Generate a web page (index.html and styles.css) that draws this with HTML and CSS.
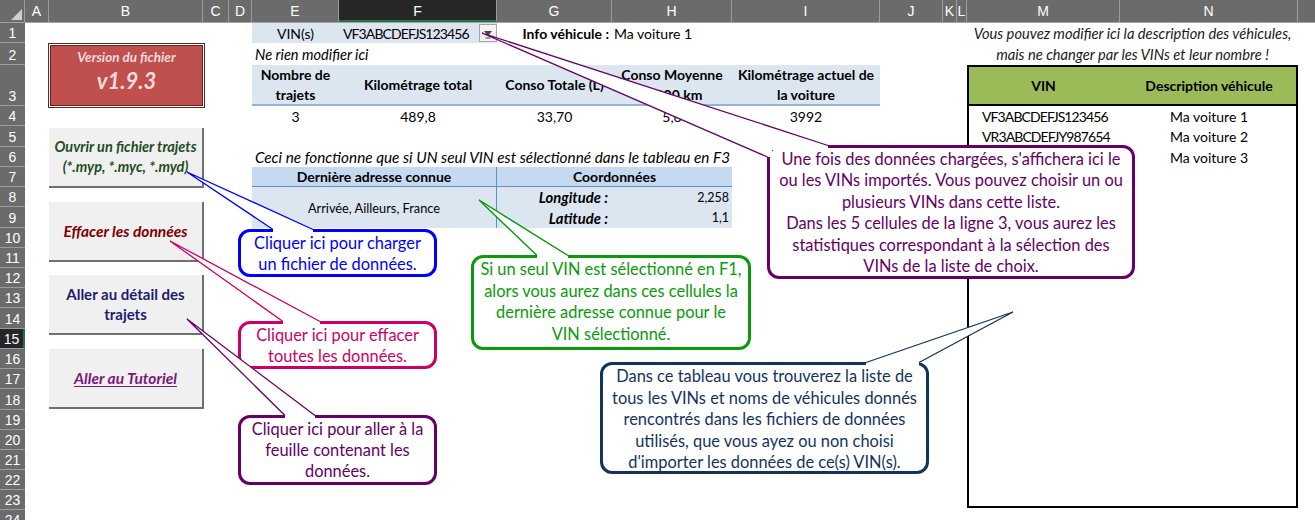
FILE: index.html
```html
<!DOCTYPE html>
<html lang="fr">
<head>
<meta charset="utf-8">
<title>Tableau de bord véhicules</title>
<link rel="stylesheet" href="styles.css">
</head>
<body>
<div class="page">
  <div class="colheads">
    <div class="ch corner"><span class="tri"></span></div>
    <div class="ch">A</div>
    <div class="ch">B</div>
    <div class="ch">C</div>
    <div class="ch">D</div>
    <div class="ch">E</div>
    <div class="ch sel">F</div>
    <div class="ch">G</div>
    <div class="ch">H</div>
    <div class="ch">I</div>
    <div class="ch">J</div>
    <div class="ch">K</div>
    <div class="ch">L</div>
    <div class="ch">M</div>
    <div class="ch">N</div>
    <div class="ch last"></div>
  </div>

  <div class="sheet">
    <div class="rh">1</div>
    <div class="rh">2</div>
    <div class="rh">3</div>
    <div class="rh">4</div>
    <div class="rh">5</div>
    <div class="rh">6</div>
    <div class="rh">7</div>
    <div class="rh">8</div>
    <div class="rh">9</div>
    <div class="rh">10</div>
    <div class="rh">11</div>
    <div class="rh">12</div>
    <div class="rh">13</div>
    <div class="rh">14</div>
    <div class="rh sel">15</div>
    <div class="rh">16</div>
    <div class="rh">17</div>
    <div class="rh">18</div>
    <div class="rh">19</div>
    <div class="rh">20</div>
    <div class="rh">21</div>
    <div class="rh">22</div>
    <div class="rh">23</div>
    <div class="rh">24</div>

    <!-- Version -->
    <div class="version">
      <div class="version-title">Version du fichier</div>
      <div class="version-num">v1.9.3</div>
    </div>

    <!-- Buttons -->
    <div class="buttons">
      <div class="btn btn-open">Ouvrir un fichier trajets<br>(*.myp, *.myc, *.myd)</div>
      <div class="btn btn-clear">Effacer les données</div>
      <div class="btn btn-detail">Aller au détail des<br>trajets</div>
      <div class="btn btn-tuto"><span>Aller au Tutoriel</span></div>
    </div>

    <!-- Row 1 -->
    <div class="cell c-e r-1 vin-label">VIN(s)</div>
    <div class="cell c-f r-1 vin-value">
      <span class="vin">VF3ABCDEFJS123456</span>
      <span class="dropdown">
        <svg width="16" height="15" viewBox="0 0 16 15"><path d="M4 5h8l-4 5z" fill="#444"/><path d="M5.5 12h5" stroke="#444" stroke-width="1"/></svg>
      </span>
    </div>
    <div class="cell c-g r-1 info-label">Info véhicule :</div>
    <div class="cell c-h r-1 info-value">Ma voiture 1</div>

    <!-- Row 2 -->
    <div class="cell c-e r-2 note">Ne rien modifier ici</div>

    <!-- Row 3 : headers -->
    <div class="sh c-e r-3">Nombre de<br>trajets</div>
    <div class="sh c-f r-3">Kilométrage total</div>
    <div class="sh c-g r-3">Conso Totale (L)</div>
    <div class="sh c-h r-3">Conso Moyenne<br>L/100 km</div>
    <div class="sh c-i r-3">Kilométrage actuel de<br>la voiture</div>

    <!-- Row 4 : values -->
    <div class="sv c-e r-4">3</div>
    <div class="sv c-f r-4">489,8</div>
    <div class="sv c-g r-4">33,70</div>
    <div class="sv c-h r-4">5,6</div>
    <div class="sv c-i r-4">3992</div>

    <!-- Row 6 -->
    <div class="cell c-e r-6 note note-wide">Ceci ne fonctionne que si UN seul VIN est sélectionné dans le tableau en F3</div>

    <!-- Address table -->
    <div class="ah ah-addr">Dernière adresse connue</div>
    <div class="ah ah-coord">Coordonnées</div>
    <div class="addr">Arrivée, Ailleurs, France</div>
    <div class="coord-label r-8">Longitude :</div>
    <div class="coord-val r-8">2,258</div>
    <div class="coord-label r-9">Latitude :</div>
    <div class="coord-val r-9">1,1</div>

    <!-- Right list -->
    <div class="list-note r-1">Vous pouvez modifier ici la description des véhicules,</div>
    <div class="list-note r-2">mais ne changer par les VINs et leur nombre !</div>
    <div class="lh c-m r-3">VIN</div>
    <div class="lh c-n r-3">Description véhicule</div>
    <div class="lv c-m r-4"><span class="vin">VF3ABCDEFJS123456</span></div>
    <div class="ld c-n r-4">Ma voiture 1</div>
    <div class="lv c-m r-5"><span class="vin">VR3ABCDEFJY987654</span></div>
    <div class="ld c-n r-5">Ma voiture 2</div>
    <div class="ld c-n r-6">Ma voiture 3</div>
    <div class="list-frame"></div>
  </div>

  <!-- Callouts -->
  <div class="callout co-blue">Cliquer ici pour charger<br>un fichier de données.</div>
  <div class="callout co-pink">Cliquer ici pour effacer<br>toutes les données.</div>
  <div class="callout co-plum">Cliquer ici pour aller à la<br>feuille contenant les<br>données.</div>
  <div class="callout co-green">Si un seul VIN est sélectionné en F1,<br>alors vous aurez dans ces cellules la<br>dernière adresse connue pour le<br>VIN sélectionné.</div>
  <div class="callout co-purple">Une fois des données chargées, s'affichera ici le<br>ou les VINs importés. Vous pouvez choisir un ou<br>plusieurs VINs dans cette liste.<br>Dans les 5 cellules de la ligne 3, vous aurez les<br>statistiques correspondant à la sélection des<br>VINs de la liste de choix.</div>
  <div class="callout co-navy">Dans ce tableau vous trouverez la liste de<br>tous les VINs et noms de véhicules donnés<br>rencontrés dans les fichiers de données<br>utilisés, que vous ayez ou non choisi<br>d'importer les données de ce(s) VIN(s).</div>

  <svg class="wedges" width="1315" height="520" viewBox="0 0 1315 520">
    <!-- blue -->
    <polygon points="187,172 273,229 273,234 313,234 313,229" fill="#fff"/>
    <polyline points="273,229.5 187,172 313,229.5" fill="none" stroke="#0000ff" stroke-width="1.3"/>
    <!-- pink -->
    <polygon points="170,241 283,321 283,326 320,326 320,321" fill="#fff"/>
    <polyline points="283,321.5 170,241 320,321.5" fill="none" stroke="#cc0066" stroke-width="1.3"/>
    <!-- plum -->
    <polygon points="187,319 285,415 285,420 315,420 315,415" fill="#fff"/>
    <polyline points="285,415.5 187,319 315,415.5" fill="none" stroke="#660066" stroke-width="1.3"/>
    <!-- green -->
    <polygon points="479,200 537,255 537,260 568,260 568,255" fill="#fff"/>
    <polyline points="537,255.5 479,200 568,255.5" fill="none" stroke="#0a9a0a" stroke-width="1.4"/>
    <!-- purple -->
    <polygon points="482,33 767.5,157 772,157 772,150 828,150 828,145" fill="#fff"/>
    <polyline points="767.5,157 482,33 828,145.5" fill="none" stroke="#660066" stroke-width="1.3"/>
    <!-- navy -->
    <polygon points="1013,312 866,362 866,367 919,367 919,362" fill="#fff"/>
    <polyline points="866,362.5 1013,312 919,362.5" fill="none" stroke="#13335e" stroke-width="1.3"/>
  </svg>
</div>
</body>
</html>
```

FILE: styles.css
```css
* { box-sizing: border-box; }

html, body {
  margin: 0;
  padding: 0;
  background: #fff;
}

body {
  font-family: "Lato", "Liberation Sans", sans-serif;
  font-size: 14px;
  color: #000;
}

.page {
  position: relative;
  width: 1315px;
  height: 520px;
  overflow: hidden;
}

/* ---------- column headers ---------- */
.colheads {
  display: grid;
  grid-template-columns: 25px 24px 154px 26px 23px 87px 158px 115px 120px 148px 63px 14px 10px 153px 178px 1fr;
  height: 23px;
  background: #6b6b6b;
  border-bottom: 1px solid #a3a3a3;
}

.ch {
  display: flex;
  align-items: center;
  justify-content: center;
  color: #fff;
  font-family: "Liberation Sans", sans-serif;
  font-size: 14px;
  border-right: 1px solid #9c9c9c;
  position: relative;
}

.ch.last { border-right: none; }

.ch.sel {
  background: #262626;
  border-bottom: 2px solid #217346;
  padding-top: 2px;
}

.corner .tri {
  position: absolute;
  right: 2px;
  bottom: 2px;
  width: 0;
  height: 0;
  border-left: 11px solid transparent;
  border-bottom: 11px solid #cfcfcf;
}

/* ---------- sheet grid ---------- */
.sheet {
  display: grid;
  grid-template-columns: 25px 24px 154px 26px 23px 87px 158px 115px 120px 148px 63px 14px 10px 153px 178px 1fr;
  grid-template-rows: 20px 22px 41px 20px 21px 20px 20px 20px 21px 20px 20px 20px 20px 21px 20px 20px 20px 21px 20px 20px 20px 20px 20px 20px;
}

.rh {
  grid-column: 1;
  display: flex;
  align-items: flex-end;
  justify-content: center;
  padding-bottom: 1px;
  background: #6b6b6b;
  color: #fff;
  font-family: "Liberation Sans", sans-serif;
  font-size: 14px;
  border-bottom: 1px solid #9c9c9c;
}

.rh.sel {
  background: #262626;
  border-right: 2px solid #217346;
}

.c-e { grid-column: 6; }
.c-f { grid-column: 7; }
.c-g { grid-column: 8; }
.c-h { grid-column: 9; }
.c-i { grid-column: 10; }
.c-m { grid-column: 14; }
.c-n { grid-column: 15; }
.r-1 { grid-row: 1; }
.r-2 { grid-row: 2; }
.r-3 { grid-row: 3; }
.r-4 { grid-row: 4; }
.r-5 { grid-row: 5; }
.r-6 { grid-row: 6; }
.r-8 { grid-row: 8; }
.r-9 { grid-row: 9; }

.cell {
  display: flex;
  align-items: center;
  white-space: nowrap;
  padding: 0 3px;
  font-size: 14px;
}

.vin { letter-spacing: -0.9px; }

/* ---------- version box ---------- */
.version {
  grid-column: 3;
  grid-row: 2 / 4;
  align-self: start;
  height: 65px;
  margin: 0 -2px 0 -1px;
  border: 3px double #632523;
  background: #c0504d;
  background-clip: padding-box;
  color: #f2dcdb;
  display: flex;
  flex-direction: column;
  align-items: center;
  font-style: italic;
  font-weight: bold;
}

.version-title {
  font-size: 13.5px;
  line-height: 18px;
  padding-top: 2px;
}

.version-num {
  font-size: 22px;
  line-height: 28px;
  margin-top: 1px;
}

/* ---------- buttons ---------- */
.buttons {
  grid-column: 3;
  grid-row: 5 / 22;
  display: flex;
  flex-direction: column;
  gap: 13.7px;
  padding-top: 2px;
}

.btn {
  height: 60px;
  margin-right: -1px;
  background: #f0f0f0;
  border-right: 2px solid #707070;
  border-bottom: 2px solid #707070;
  display: flex;
  align-items: center;
  justify-content: center;
  text-align: center;
  font-weight: bold;
  font-size: 15.5px;
  line-height: 20px;
}

.btn-open { color: #1e4d1e; font-style: italic; font-size: 14.5px; }
.btn-clear { color: #7f0000; font-style: italic; }
.btn-detail { color: #1c1c6e; font-size: 15px; }
.btn-tuto { color: #7a1a7a; font-style: italic; }
.btn-tuto span { text-decoration: underline; text-underline-offset: 2px; }

/* ---------- top table ---------- */
.vin-label {
  background: #dce6f1;
  justify-content: center;
}

.vin-value {
  background: #dce6f1;
  padding: 0 0 0 4px;
}

.dropdown {
  margin-left: auto;
  width: 18px;
  height: 18px;
  border: 1px solid #a6a6a6;
  background: #f3f3f3;
  display: flex;
  align-items: center;
  justify-content: center;
}

.info-label {
  justify-content: flex-end;
  font-weight: bold;
}

.info-value { padding-left: 2px; }

.note {
  font-style: italic;
  padding-left: 3px;
  overflow: visible;
  font-size: 14.6px;
}

.note-wide {
  grid-column: 6 / 10;
  font-size: 15.3px;
}

.sh {
  display: flex;
  align-items: center;
  justify-content: center;
  text-align: center;
  white-space: nowrap;
  background: #dce6f1;
  border-bottom: 2px solid #95b3d7;
  font-weight: bold;
  line-height: 20px;
  padding-top: 1px;
}

.sv {
  display: flex;
  align-items: center;
  justify-content: center;
}

/* ---------- address table ---------- */
.ah {
  grid-row: 7;
  background: #c5d9f1;
  border-bottom: 1px solid #5b8fd6;
  font-weight: bold;
  display: flex;
  align-items: center;
  justify-content: center;
}

.ah-addr { grid-column: 6 / 8; border-right: 1px solid #5b8fd6; }
.ah-coord { grid-column: 8 / 10; }

.addr {
  grid-column: 6 / 8;
  grid-row: 8 / 10;
  background: #dce6f1;
  border-right: 1px solid #5b8fd6;
  display: flex;
  align-items: center;
  justify-content: center;
  font-size: 12.8px;
}

.coord-label {
  grid-column: 8;
  background: #dce6f1;
  display: flex;
  align-items: center;
  justify-content: flex-end;
  padding-right: 4px;
  font-weight: bold;
  font-style: italic;
  font-size: 14.8px;
}

.coord-val {
  grid-column: 9;
  background: #dce6f1;
  display: flex;
  align-items: center;
  justify-content: flex-end;
  padding-right: 3px;
  font-size: 12.5px;
}

/* ---------- right list ---------- */
.list-note {
  grid-column: 14 / 16;
  display: flex;
  align-items: center;
  justify-content: center;
  font-style: italic;
  white-space: nowrap;
  color: #1a1a1a;
  font-size: 14.7px;
}

.lh {
  background: #9bbb59;
  border-bottom: 2px solid #000;
  font-weight: bold;
  display: flex;
  align-items: center;
  justify-content: center;
  padding-top: 2px;
}

.lv {
  display: flex;
  align-items: center;
  padding-left: 15px;
}

.ld {
  display: flex;
  align-items: center;
  justify-content: center;
}

.list-frame {
  grid-column: 14 / 16;
  grid-row: 3 / 24;
  margin-bottom: 2px;
  border: 2px solid #000;
  pointer-events: none;
}

/* ---------- callouts ---------- */
.callout {
  position: absolute;
  background: #fff;
  border: 3px solid;
  border-radius: 12px;
  text-align: center;
  white-space: nowrap;
  font-family: "Lato", "Liberation Sans", sans-serif;
  font-size: 16.4px;
  line-height: 21px;
}

.co-blue {
  left: 238px; top: 229px; width: 199px; height: 48px;
  color: #0000ff; border-color: #0000ff;
}

.co-pink {
  left: 238px; top: 321px; width: 199px; height: 48px;
  color: #cc0066; border-color: #cc0066;
}

.co-plum {
  left: 238px; top: 415px; width: 199px; height: 70px;
  color: #660066; border-color: #660066;
}

.co-green {
  left: 471px; top: 255px; width: 280px; height: 95px;
  color: #0a9a0a; border-color: #0a9a0a;
  line-height: 21.7px;
}

.co-purple {
  left: 767px; top: 145px; width: 368px; height: 134px;
  color: #660066; border-color: #660066;
  line-height: 21.4px;
}

.co-navy {
  left: 600px; top: 362px; width: 329px; height: 112px;
  color: #13335e; border-color: #13335e;
  line-height: 21.6px;
}

.wedges {
  position: absolute;
  left: 0;
  top: 0;
  pointer-events: none;
}
```
